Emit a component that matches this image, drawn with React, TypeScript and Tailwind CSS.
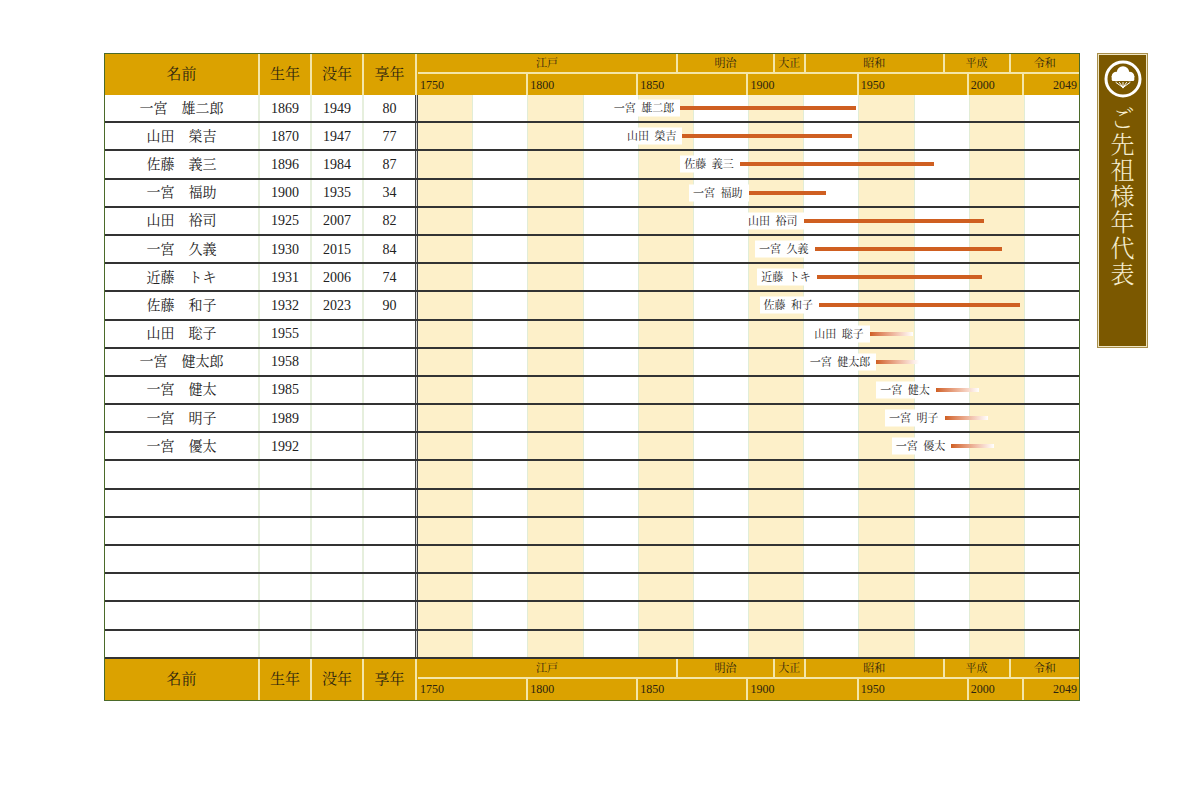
import React from "react";

type Person = { name: string; label: string; born: number; died?: number; age?: number };

const people: Person[] = [
  { name: "一宮　雄二郎", label: "一宮\u2002雄二郎", born: 1869, died: 1949, age: 80 },
  { name: "山田　榮吉", label: "山田\u2002榮吉", born: 1870, died: 1947, age: 77 },
  { name: "佐藤　義三", label: "佐藤\u2002義三", born: 1896, died: 1984, age: 87 },
  { name: "一宮　福助", label: "一宮\u2002福助", born: 1900, died: 1935, age: 34 },
  { name: "山田　裕司", label: "山田\u2002裕司", born: 1925, died: 2007, age: 82 },
  { name: "一宮　久義", label: "一宮\u2002久義", born: 1930, died: 2015, age: 84 },
  { name: "近藤　トキ", label: "近藤\u2002トキ", born: 1931, died: 2006, age: 74 },
  { name: "佐藤　和子", label: "佐藤\u2002和子", born: 1932, died: 2023, age: 90 },
  { name: "山田　聡子", label: "山田\u2002聡子", born: 1955 },
  { name: "一宮　健太郎", label: "一宮\u2002健太郎", born: 1958 },
  { name: "一宮　健太", label: "一宮\u2002健太", born: 1985 },
  { name: "一宮　明子", label: "一宮\u2002明子", born: 1989 },
  { name: "一宮　優太", label: "一宮\u2002優太", born: 1992 },
];

const START = 1750;
const SPAN = 300;
const pct = (y: number) => ((y - START) / SPAN) * 100;

const FONT = "font-['Liberation_Serif','Noto_Serif_CJK_JP','Noto_Sans_CJK_JP',serif]";

function Stripes() {
  return (
    <>
      {Array.from({ length: 12 }).map((_, i) => (
        <div
          key={i}
          className={
            "flex-1 h-full " +
            (i % 2 === 0 ? "bg-[#fdf0c9] " : "bg-white ") +
            (i < 11 ? "border-r border-[#e2edd6]" : "")
          }
        />
      ))}
    </>
  );
}

function Row({ p }: { p?: Person }) {
  return (
    <div className="flex h-[28.2px] border-b-2 border-[#333333] text-[14px] text-[#222]">
      <div className="w-[155px] border-r-2 border-[#e6efdd] flex items-center justify-center">{p?.name}</div>
      <div className="w-[52px] border-r-2 border-[#e6efdd] flex items-center justify-center">{p?.born}</div>
      <div className="w-[52px] border-r-2 border-[#e6efdd] flex items-center justify-center">{p?.died}</div>
      <div className="w-[51px] flex items-center justify-center">{p?.age}</div>
      <div className="w-[3px] border-x border-[#444] bg-[#d6d6d6]" />
      <div className="relative flex-1 flex">
        <Stripes />
        {p && (
          <>
            <div
              className="absolute top-1/2 -translate-y-1/2 bg-white pl-[4px] pr-[6px] text-[11px] leading-[17px] whitespace-nowrap text-[#222]"
              style={{ right: `${100 - pct(p.born)}%` }}
            >
              {p.label}
            </div>
            {p.died ? (
              <div
                className="absolute top-1/2 -translate-y-1/2 h-[4px] bg-[#cf5f21]"
                style={{ left: `${pct(p.born)}%`, width: `${pct(p.died) - pct(p.born)}%` }}
              />
            ) : (
              <div
                className="absolute top-1/2 -translate-y-1/2 h-[4px] w-[43px] bg-linear-to-r from-[#cf5f21] to-white"
                style={{ left: `${pct(p.born)}%` }}
              />
            )}
          </>
        )}
      </div>
    </div>
  );
}

function Header() {
  const cream = "border-[#f4e6a8]";
  return (
    <div className="flex h-[41px] bg-[#dba200] text-[#2b2410]">
      <div className={`w-[155px] border-r-2 ${cream} flex items-center justify-center text-[15px]`}>名前</div>
      <div className={`w-[52px] border-r-2 ${cream} flex items-center justify-center text-[15px]`}>生年</div>
      <div className={`w-[52px] border-r-2 ${cream} flex items-center justify-center text-[15px]`}>没年</div>
      <div className="w-[51px] flex items-center justify-center text-[15px]">享年</div>
      <div className={`w-[3px] border-l-2 ${cream}`} />
      <div className="flex-1 flex flex-col">
        <div className={`flex h-[20px] border-b-2 ${cream} text-[11px]`}>
          <div className={`w-[39.333%] border-r-2 ${cream} flex items-center justify-center`}>江戸</div>
          <div className={`w-[14.667%] border-r-2 ${cream} flex items-center justify-center`}>明治</div>
          <div className={`w-[4.667%] border-r-2 ${cream} flex items-center justify-center`}>大正</div>
          <div className={`w-[21%] border-r-2 ${cream} flex items-center justify-center`}>昭和</div>
          <div className={`w-[10%] border-r-2 ${cream} flex items-center justify-center`}>平成</div>
          <div className="flex-1 flex items-center justify-center">令和</div>
        </div>
        <div className="flex flex-1 text-[12px]">
          <div className={`w-[16.667%] border-r-2 ${cream} flex items-center pl-[2px]`}>1750</div>
          <div className={`w-[16.667%] border-r-2 ${cream} flex items-center pl-[2px]`}>1800</div>
          <div className={`w-[16.667%] border-r-2 ${cream} flex items-center pl-[2px]`}>1850</div>
          <div className={`w-[16.667%] border-r-2 ${cream} flex items-center pl-[2px]`}>1900</div>
          <div className={`w-[16.667%] border-r-2 ${cream} flex items-center pl-[2px]`}>1950</div>
          <div className={`w-[8.333%] border-r-2 ${cream} flex items-center pl-[2px]`}>2000</div>
          <div className="flex-1 flex items-center justify-end pr-[2px]">2049</div>
        </div>
      </div>
    </div>
  );
}

function Crest() {
  return (
    <svg width="40" height="40" viewBox="0 0 40 40">
      <circle cx="20" cy="20" r="17" fill="none" stroke="#ffffff" strokeWidth="3" />
      <circle cx="13.5" cy="17.5" r="4.8" fill="#ffffff" />
      <circle cx="20" cy="13.5" r="6.2" fill="#ffffff" />
      <circle cx="26.5" cy="17.5" r="4.8" fill="#ffffff" />
      <rect x="8.7" y="16" width="22.6" height="6" rx="1.5" fill="#ffffff" />
      <g stroke="#ffffff" strokeWidth="1" strokeLinecap="round">
        <line x1="20" y1="28.5" x2="13" y2="23.5" />
        <line x1="20" y1="28.5" x2="16.5" y2="23.5" />
        <line x1="20" y1="28.5" x2="20" y2="23.5" />
        <line x1="20" y1="28.5" x2="23.5" y2="23.5" />
        <line x1="20" y1="28.5" x2="27" y2="23.5" />
      </g>
    </svg>
  );
}

export default function App() {
  const rows: (Person | undefined)[] = [...people, ...Array.from({ length: 7 }).map(() => undefined)];
  return (
    <div className={`w-[1200px] h-[800px] bg-white flex items-start pl-[104px] pt-[53px] ${FONT}`}>
      <div className="w-[976px] border border-[#4b6a2a] flex flex-col">
        <Header />
        {rows.map((p, i) => (
          <Row key={i} p={p} />
        ))}
        <Header />
      </div>
      <div className="ml-[17px] w-[51px] h-[295px] border border-[#a88f4c] p-[1px] bg-[#efe5c2]">
        <div className="w-full h-full bg-[#7b5800] flex flex-col items-center pt-[4px]">
          <Crest />
          <div className="mt-[7px] flex flex-col items-center text-[24px] leading-[26px] text-[#f6eed0] font-light">
            {"ご先祖様年代表".split("").map((c, i) => (
              <span key={i}>{c}</span>
            ))}
          </div>
        </div>
      </div>
    </div>
  );
}
